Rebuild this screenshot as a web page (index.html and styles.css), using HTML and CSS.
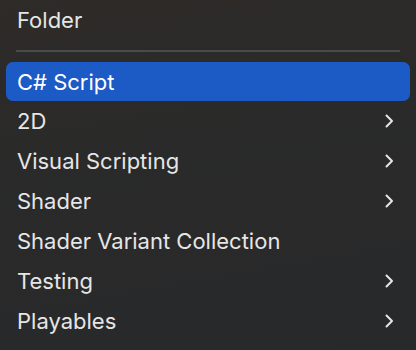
FILE: index.html
```html
<!DOCTYPE html>
<html lang="en">
<head>
    <meta charset="UTF-8">
    <title>Create Menu</title>
    <link rel="stylesheet" href="styles.css">
</head>
<body>
    <ul class="menu">
        <li class="item">Folder</li>
        <li class="separator"></li>
        <li class="item selected">C# Script</li>
        <li class="item">2D
            <svg class="chevron" viewBox="0 0 9 14"><path d="M1.5 1.5 7 7l-5.5 5.5"/></svg>
        </li>
        <li class="item">Visual Scripting
            <svg class="chevron" viewBox="0 0 9 14"><path d="M1.5 1.5 7 7l-5.5 5.5"/></svg>
        </li>
        <li class="item">Shader
            <svg class="chevron" viewBox="0 0 9 14"><path d="M1.5 1.5 7 7l-5.5 5.5"/></svg>
        </li>
        <li class="item">Shader Variant Collection</li>
        <li class="item">Testing
            <svg class="chevron" viewBox="0 0 9 14"><path d="M1.5 1.5 7 7l-5.5 5.5"/></svg>
        </li>
        <li class="item">Playables
            <svg class="chevron" viewBox="0 0 9 14"><path d="M1.5 1.5 7 7l-5.5 5.5"/></svg>
        </li>
    </ul>
</body>
</html>
```

FILE: styles.css
```css
/* Reset */
body, ul {
    margin: 0;
    padding: 0;
}

body {
    width: 416px;
    height: 350px;
    overflow: hidden;
    font-family: Inter, "Liberation Sans", sans-serif;
    background: linear-gradient(170deg, #2e2b28 0%, #2a2a2a 40%, #28292a 100%);
    color: #e6e6e6;
}

.menu {
    list-style: none;
    padding: 0 6px;
}

.item {
    height: 40px;
    padding: 0 11px;
    display: flex;
    align-items: center;
    justify-content: space-between;
    font-size: 22px;
    border-radius: 7px;
}

/* submenu arrow */
.chevron {
    width: 9px;
    height: 14px;
    margin-right: 5px;
    fill: none;
    stroke: #e6e6e6;
    stroke-width: 2;
    stroke-linecap: round;
    stroke-linejoin: round;
}

.item.selected {
    height: 39px;
    background-color: #1c5ac6;
    color: #fff;
}

.separator {
    height: 2px;
    margin: 10px 10px 10px;
    background-color: #4a4a4a;
}
```
